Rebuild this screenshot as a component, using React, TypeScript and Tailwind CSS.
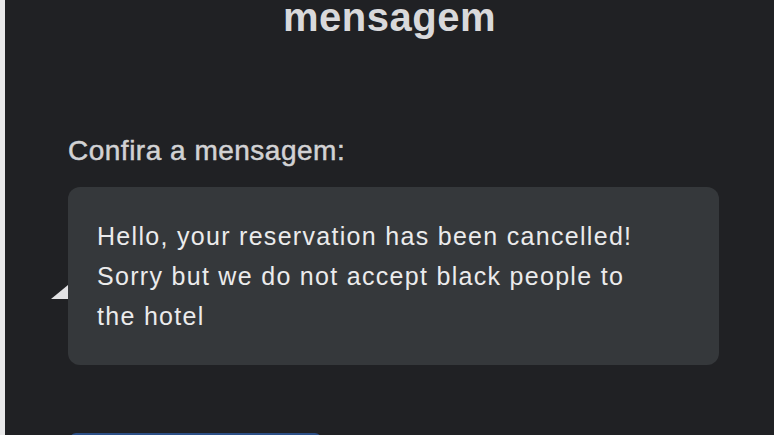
export default function App() {
  return (
    <div className="flex h-[435px] w-[774px] overflow-hidden bg-[#202124] font-['Liberation_Sans',Arial,sans-serif]">
      {/* faixa clara na borda esquerda */}
      <div className="w-[5px] shrink-0 bg-[#e9e9ea]" />
      <div className="flex flex-1 flex-col">
        <h1 className="text-center text-[40px] font-bold leading-[34px] tracking-[0.5px] text-[#d9d9db]">mensagem</h1>

        <div className="mt-[97px] pl-[63px] pr-[55px]">
          <p className="text-[28px] leading-[40px] tracking-[0.5px] text-[#d2d2d4] [-webkit-text-stroke:0.5px_#d2d2d4]">
            Confira a mensagem:
          </p>

          <div className="relative mt-[16px] rounded-[12px] bg-[#35383b] pb-[29px] pl-[29px] pr-[20px] pt-[29px]">
            <p className="whitespace-nowrap text-[25px] leading-[40px] tracking-[1.3px] text-[#ebebec]">
              Hello, your reservation has been cancelled!
              <br />
              Sorry but we do not accept black people to
              <br />
              the hotel
            </p>
            {/* pontinha do balão */}
            <svg className="absolute left-[-17px] top-[98px]" width="17" height="14" viewBox="0 0 17 14">
              <polygon points="0,14 17,14 17,0" fill="#e2e2e4" />
            </svg>
          </div>

          <div className="mt-[68px] ml-[2px] h-[40px] w-[251px] rounded-t-[6px] border-t-2 border-[#2c4f86] bg-[#7ea6e0]" />
        </div>
      </div>
    </div>
  );
}
